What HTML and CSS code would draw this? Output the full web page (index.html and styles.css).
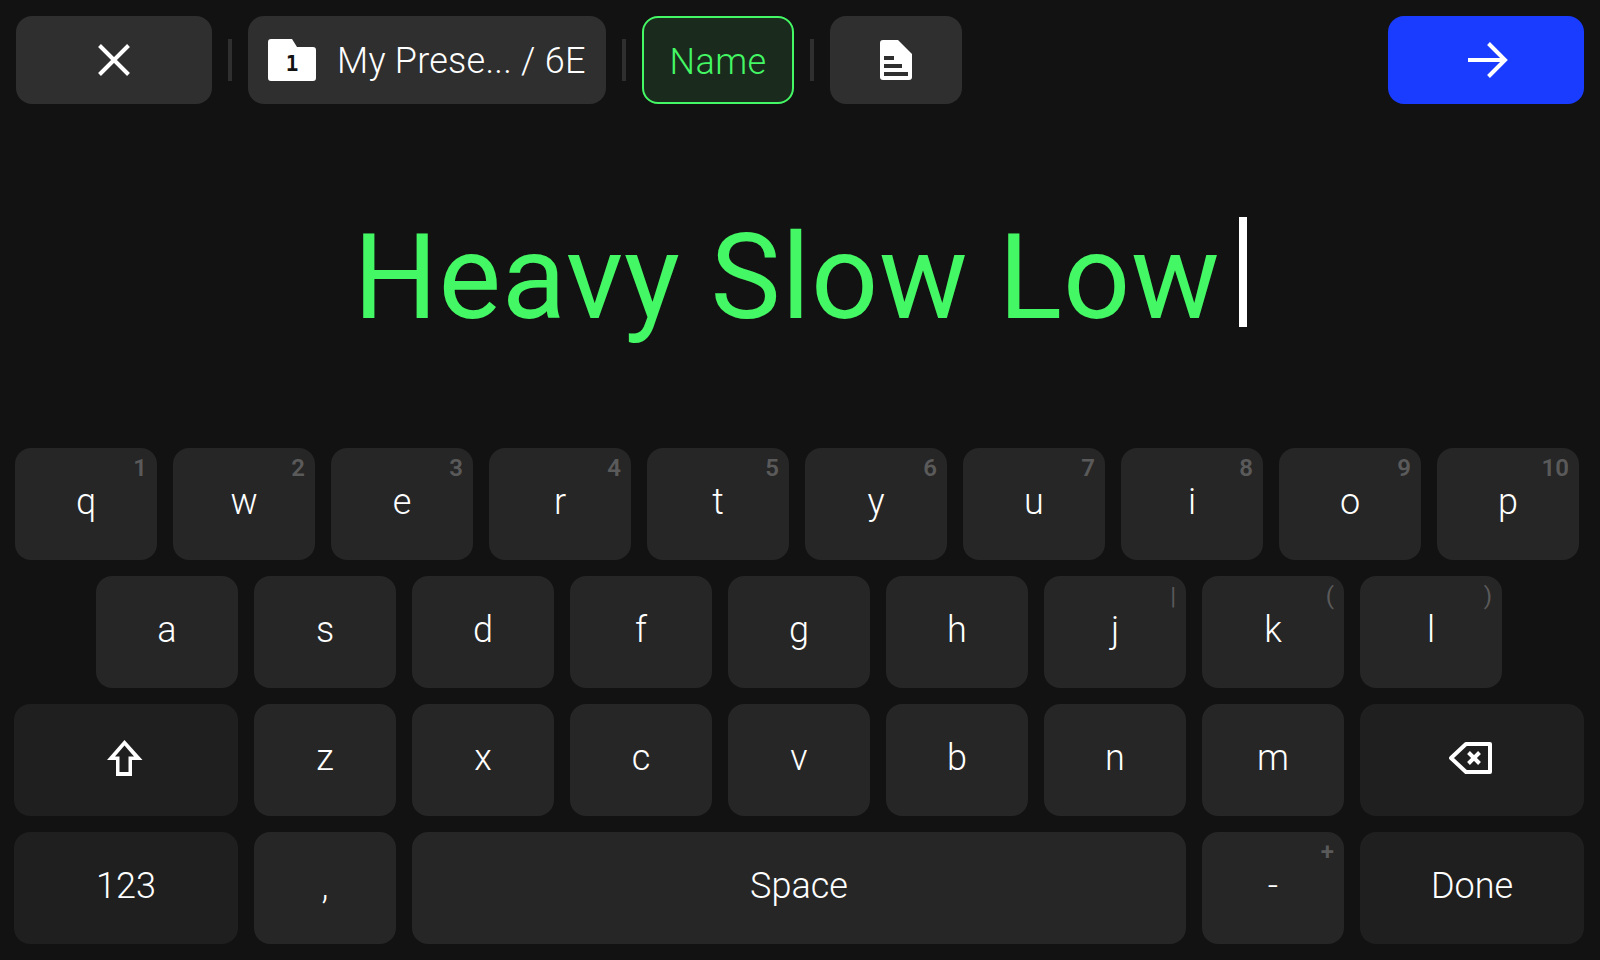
FILE: index.html
```html
<!DOCTYPE html>
<html lang="en">
<head>
<meta charset="utf-8">
<title>Heavy Slow Low</title>
<link rel="stylesheet" href="styles.css">
</head>
<body>
<div class="app">
  <header class="topbar">
    <button class="tb tb-close" aria-label="Close">
      <svg class="ico" width="32" height="32" viewBox="0 0 32 32"><path d="M1.5 1.5 30.5 30.5M30.5 1.5 1.5 30.5" fill="none" stroke="#fff" stroke-width="4"/></svg>
    </button>
    <span class="sep"></span>
    <button class="tb tb-preset">
      <svg class="ico" width="48" height="42" viewBox="0 0 48 42"><path d="M3 0H24L29 8H45a3 3 0 0 1 3 3V39a3 3 0 0 1-3 3H3a3 3 0 0 1-3-3V3a3 3 0 0 1 3-3Z" fill="#fff"/><text class="folder-num" x="24" y="32" text-anchor="middle">1</text></svg>
      <span class="tb-text">My Prese... / 6E</span>
    </button>
    <span class="sep"></span>
    <button class="tb tb-name">Name</button>
    <span class="sep"></span>
    <button class="tb tb-doc" aria-label="Document">
      <svg class="ico" width="32" height="40" viewBox="0 0 32 40"><path d="M3 0H18L32 14V37a3 3 0 0 1-3 3H3a3 3 0 0 1-3-3V3a3 3 0 0 1 3-3Z" fill="#fff"/><path d="M4 16H14V20H4ZM4 24H22V28H4ZM4 32H28V36H4Z" fill="#2f2f2f"/></svg>
    </button>
    <button class="tb tb-next" aria-label="Next">
      <svg class="ico next-ico" width="40" height="36" viewBox="0 0 40 36"><path d="M0 18H37M20.500 1.500 37 18 20.500 34.500" fill="none" stroke="#fff" stroke-width="4"/></svg>
    </button>
  </header>

  <main class="entry">
    <div class="entry-text"><span class="entry-label">Heavy Slow Low</span><span class="caret"></span></div>
  </main>

  <section class="keyboard">
    <div class="row row-top">
      <div class="key">q<span class="sup">1</span></div>
      <div class="key">w<span class="sup">2</span></div>
      <div class="key">e<span class="sup">3</span></div>
      <div class="key">r<span class="sup">4</span></div>
      <div class="key">t<span class="sup">5</span></div>
      <div class="key">y<span class="sup">6</span></div>
      <div class="key">u<span class="sup">7</span></div>
      <div class="key">i<span class="sup">8</span></div>
      <div class="key">o<span class="sup">9</span></div>
      <div class="key">p<span class="sup">10</span></div>
    </div>
    <div class="row row-home">
      <div class="key">a</div>
      <div class="key">s</div>
      <div class="key">d</div>
      <div class="key">f</div>
      <div class="key">g</div>
      <div class="key">h</div>
      <div class="key">j<span class="sup sup-thin">|</span></div>
      <div class="key">k<span class="sup sup-thin">(</span></div>
      <div class="key">l<span class="sup sup-thin">)</span></div>
    </div>
    <div class="row">
      <div class="key key-wide">
        <svg class="ico shift-ico" width="36" height="36" viewBox="0 0 36 36"><path fill-rule="evenodd" d="M17.500 0 35.500 20H25V36H9V20H0ZM17.500 5.500 8 16.500H12.500V32H21.500V16.500H27Z" fill="#fff"/></svg>
      </div>
      <div class="key">z</div>
      <div class="key">x</div>
      <div class="key">c</div>
      <div class="key">v</div>
      <div class="key">b</div>
      <div class="key">n</div>
      <div class="key">m</div>
      <div class="key key-wide">
        <svg class="ico bksp-ico" width="44" height="32" viewBox="0 0 44 32"><path d="M18 2H42V30H18L3 16Z" fill="none" stroke="#fff" stroke-width="4" stroke-linejoin="round"/><path d="M20.500 10.500 31.500 21.500M31.500 10.500 20.500 21.500" fill="none" stroke="#fff" stroke-width="4"/></svg>
      </div>
    </div>
    <div class="row">
      <div class="key key-wide">123</div>
      <div class="key">,</div>
      <div class="key key-space">Space</div>
      <div class="key">-<span class="sup">+</span></div>
      <div class="key key-wide">Done</div>
    </div>
  </section>
</div>
</body>
</html>
```
FILE: styles.css
```css
* { box-sizing: border-box; }
html, body { margin: 0; height: 100%; }
body {
  background: #121212;
  color: #fff;
  font-family: "Roboto", "Noto Sans", sans-serif;
  overflow: hidden;
}
.app {
  width: 1600px;
  height: 960px;
  display: flex;
  flex-direction: column;
}
.topbar {
  display: flex;
  align-items: center;
  gap: 16px;
  padding: 16px 16px 0;
  height: 104px;
  flex: none;
}
.tb {
  height: 88px;
  border: 0;
  border-radius: 16px;
  background: #2f2f2f;
  color: #fff;
  font: inherit;
  font-size: 36px;
  display: flex;
  align-items: center;
  justify-content: center;
  padding: 0;
  flex: none;
}
.ico { display: block; flex: none; }
.sep { width: 4px; height: 42px; background: #2f2f2f; flex: none; }
.tb-close { width: 196px; }
.tb-preset { width: 358px; justify-content: flex-start; padding-left: 20px; gap: 21px; }
.folder-num {
  font-family: "DejaVu Sans Mono", monospace;
  font-weight: 700;
  font-size: 21px;
  fill: #121212;
}
.tb-text { white-space: nowrap; font-size: 36px; font-weight: 300; letter-spacing: 0.25px; padding-top: 2px; }
.tb-name {
  width: 152px;
  background: #1a2a1d;
  border: 2px solid #44f764;
  color: #44f764;
  font-weight: 300;
  letter-spacing: 0.4px;
  padding-top: 4px;
}
.tb-doc { width: 132px; }
.tb-next { width: 196px; background: #1a3cff; margin-left: auto; padding-left: 3px; }
.entry {
  flex: 1;
  display: flex;
  align-items: center;
  justify-content: center;
  padding-bottom: 8px;
}
.entry-text {
  font-size: 118px;
  line-height: 110px;
  color: #44f764;
  white-space: nowrap;
  display: flex;
  align-items: center;
}
.entry-label { padding-top: 12px; letter-spacing: 0.8px; }
.caret {
  display: block;
  width: 8px;
  height: 110px;
  margin-left: 18px;
  background: #fff;
}
.keyboard {
  display: flex;
  flex-direction: column;
  gap: 16px;
  padding: 0 16px 16px 14px;
  flex: none;
}
.row { display: flex; gap: 16px; }
.row-top { margin-left: 1px; }
.row-home { margin-left: 82px; }
.key {
  position: relative;
  width: 142px;
  height: 112px;
  flex: none;
  background: #262626;
  border-radius: 16px;
  display: flex;
  align-items: center;
  justify-content: center;
  font-size: 36px;
  font-weight: 300;
  line-height: 1;
  padding-bottom: 4px;
}
.key-wide { width: 224px; background: #1f1f1f; }
.key-space { width: 774px; }
.bksp-ico { margin-right: 4px; }
.shift-ico { margin-right: 2px; }
.sup {
  position: absolute;
  top: 7px;
  right: 10px;
  font-size: 24px;
  line-height: 26px;
  font-weight: 600;
  color: #5a5a5a;
}
.sup-thin { font-weight: 400; }
```
